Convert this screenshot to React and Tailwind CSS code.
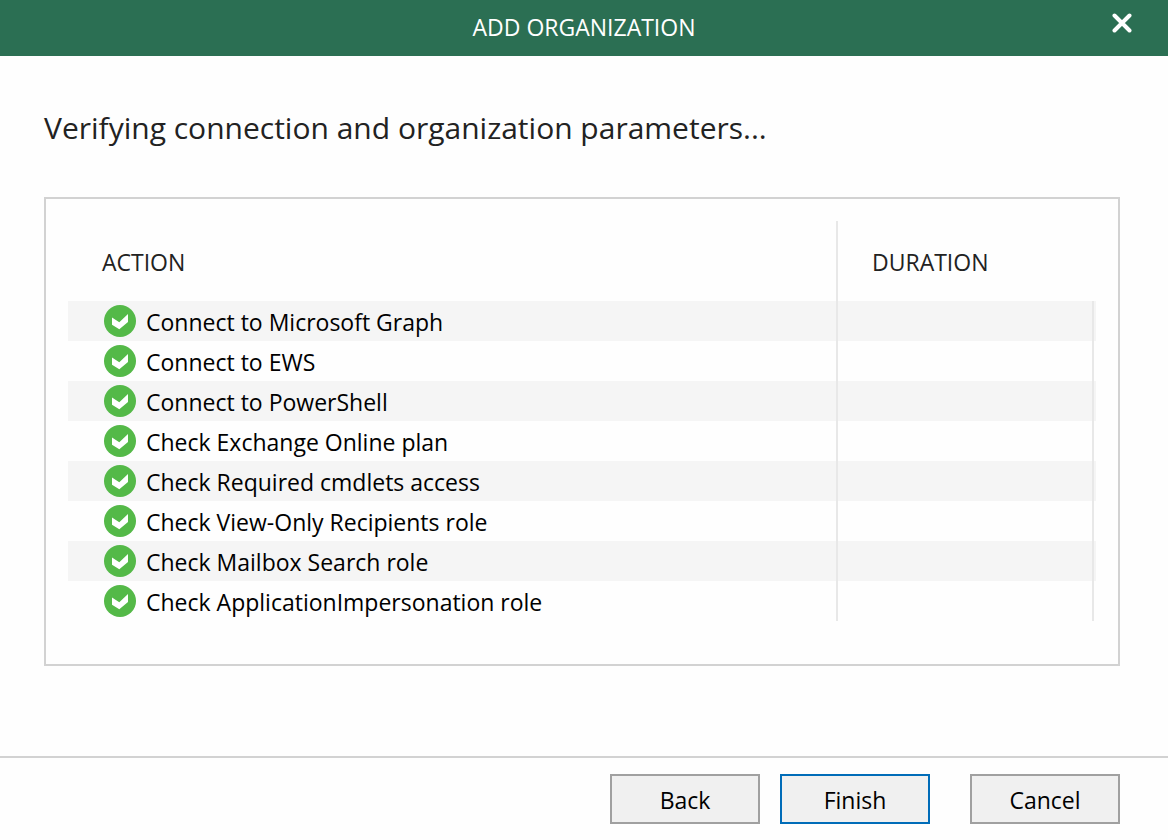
const actions = [
  { name: "Connect to Microsoft Graph", duration: "" },
  { name: "Connect to EWS", duration: "" },
  { name: "Connect to PowerShell", duration: "" },
  { name: "Check Exchange Online plan", duration: "" },
  { name: "Check Required cmdlets access", duration: "" },
  { name: "Check View-Only Recipients role", duration: "" },
  { name: "Check Mailbox Search role", duration: "" },
  { name: "Check ApplicationImpersonation role", duration: "" },
];

function SuccessIcon() {
  return (
    <svg className="size-8 shrink-0" viewBox="0 0 32 32" aria-hidden="true">
      <circle cx="16" cy="16" r="16" fill="#54b948" />
      <path d="M8 12.5 L15.3 17.2 L24 9 V17 L15.3 24.3 L8 19.8 Z" fill="#fff" />
    </svg>
  );
}

function CloseIcon() {
  return (
    <svg className="size-5" viewBox="0 0 20 20" aria-hidden="true">
      <path d="M2.5 2.5 L17.5 17.5 M17.5 2.5 L2.5 17.5" stroke="#fff" strokeWidth="4" strokeLinecap="round" />
    </svg>
  );
}

function DialogButton({ children, primary = false }) {
  return (
    <button
      type="button"
      className={`h-[50px] w-[150px] border-2 bg-[#f0f0f0] pt-0.5 text-[23px] leading-8 text-black ${
        primary ? "border-[#006cb8]" : "border-[#a0a0a0]"
      }`}
    >
      {children}
    </button>
  );
}

function ActionTable() {
  return (
    <table className="w-full table-fixed border-collapse text-left text-[23px] leading-8">
      <thead>
        <tr className="h-20 text-[#222]">
          <th scope="col" className="p-0 font-normal">
            <div className="flex h-20 items-center border-r-2 border-[#e8e8e8] pt-0.5 pl-[34px]">ACTION</div>
          </th>
          <th scope="col" className="w-[258px] p-0 pt-0.5 pl-[34px] font-normal">DURATION</th>
        </tr>
      </thead>
      <tbody>
        {actions.map((action) => (
          <tr key={action.name} className="odd:bg-[#f5f5f5]">
            <td className="p-0">
              <div className="flex h-10 items-center gap-2.5 border-r-2 border-[#e8e8e8] pl-9 text-black">
                <SuccessIcon />
                <span className="pt-0.5">{action.name}</span>
              </div>
            </td>
            <td className="p-0 pr-0.5">
              <div className="h-10 border-r-2 border-[#e8e8e8] pl-[34px]">{action.duration}</div>
            </td>
          </tr>
        ))}
      </tbody>
    </table>
  );
}

export default function App() {
  return (
    <div className="flex min-h-screen flex-col bg-[#fefefe] font-['Open_Sans',sans-serif] text-[#222]">
      <header className="grid h-14 grid-cols-[1fr_auto_1fr] items-center bg-[#2b6f53] px-9 pb-0.5 text-white">
        <h1 className="col-start-2 text-[23px] leading-8">ADD ORGANIZATION</h1>
        <button type="button" aria-label="Close" className="justify-self-end pb-2">
          <CloseIcon />
        </button>
      </header>

      <main className="flex-1 px-11 pt-12 pr-12">
        <h2 className="text-[30px] leading-[48px]">Verifying connection and organization parameters...</h2>
        <section className="mt-[45px] border-2 border-[#d2d2d2] px-[22px] pt-[22px] pb-[43px]">
          <ActionTable />
        </section>
      </main>

      <footer className="flex justify-end gap-5 border-t-2 border-[#d2d2d2] py-4 pr-12">
        <DialogButton>Back</DialogButton>
        <DialogButton primary>Finish</DialogButton>
        <div className="pl-5">
          <DialogButton>Cancel</DialogButton>
        </div>
      </footer>
    </div>
  );
}
